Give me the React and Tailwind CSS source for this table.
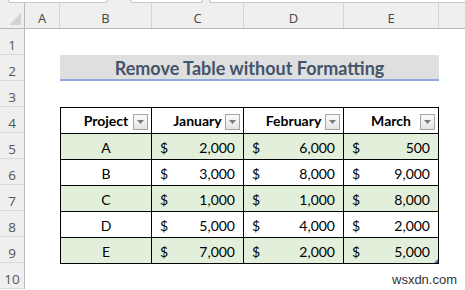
import React from "react";

const font = { fontFamily: "Lato, 'Open Sans', sans-serif" };

const rows = [
  ["A", "2,000", "6,000", "500"],
  ["B", "3,000", "8,000", "9,000"],
  ["C", "1,000", "1,000", "8,000"],
  ["D", "5,000", "4,000", "2,000"],
  ["E", "7,000", "2,000", "5,000"],
];

function FilterBtn() {
  return (
    <div className="absolute right-[3px] top-[6px] w-[15px] h-[16px] border border-[#a6a6a6] bg-gradient-to-b from-[#fafafa] to-[#e4e4e4] flex items-center justify-center">
      <svg width="7" height="4" viewBox="0 0 7 4">
        <path d="M0 0 L7 0 L3.5 4 Z" fill="#7a7a7a" />
      </svg>
    </div>
  );
}

function HeadCell({ w, children }) {
  return (
    <div className={`relative ${w} h-full border-r border-b border-black flex items-center justify-center font-bold text-[14px] text-black`}>
      <span className="pb-[1px]">{children}</span>
      <FilterBtn />
    </div>
  );
}

function MoneyCell({ w, v }) {
  return (
    <div className={`${w} h-full border-r border-b border-black flex items-center justify-between px-[8px] pt-[1px] text-[14px] text-black`}>
      <span>$</span>
      <span>{v}</span>
    </div>
  );
}

export default function App() {
  const colHeads = [
    ["w-[35px]", "A"],
    ["w-[92px]", "B"],
    ["w-[92px]", "C"],
    ["w-[100px]", "D"],
    ["w-[95px]", "E"],
  ];
  return (
    <div className="relative w-[465px] h-[290px] overflow-hidden bg-white" style={font}>
      {/* top strip */}
      <div className="h-[3px] bg-[#efefef] flex">
        <div className="ml-[8px] w-[100px] h-[3px] bg-white border border-t-0 border-[#c8c8c8] rounded-b-[3px]" />
        <div className="ml-[22px] w-[73px] h-[3px] bg-white border border-t-0 border-[#c8c8c8] rounded-b-[3px]" />
        <div className="ml-[6px] flex-1 h-[3px] bg-white border border-t-0 border-r-0 border-[#c8c8c8] rounded-bl-[3px]" />
      </div>
      {/* column headers */}
      <div className="flex h-[26px] bg-[#efefef] border-b border-[#b8b8b8] text-[13px] text-[#444]" style={{ fontFamily: "'Open Sans', sans-serif" }}>
        <div className="w-[25px] h-full border-r border-[#b8b8b8] flex items-end justify-end pr-[3px] pb-[3px]">
          <svg width="12" height="12" viewBox="0 0 12 12">
            <path d="M12 0 L12 12 L0 12 Z" fill="#d3d3d3" />
          </svg>
        </div>
        {colHeads.map(([w, l]) => (
          <div key={l} className={`${w} h-full border-r border-[#d4d4d4] flex items-center justify-center pt-[6px]`}>
            {l}
          </div>
        ))}
        <div className="flex-1" />
      </div>
      {/* body */}
      <div className="flex">
        <div className="w-[25px] bg-[#efefef] border-r border-[#b8b8b8] flex flex-col text-[13.5px] text-[#555]" style={{ fontFamily: "'Open Sans', sans-serif" }}>
          {[1, 2, 3, 4, 5, 6, 7, 8, 9, 10].map((n) => (
            <div key={n} className="h-[26px] border-b border-[#dadada] flex items-center justify-center pt-[8px] leading-none">
              {n}
            </div>
          ))}
        </div>
        <div className="flex-1 flex flex-col">
          <div className="h-[26px]" />
          <div className="h-[26px] ml-[35px] w-[379px] bg-[#dfdfdf] border-b-2 border-[#8faadc] flex items-center justify-center pt-[2px] font-bold text-[18px] text-[#44546a]">
            Remove Table without Formatting
          </div>
          <div className="h-[26px]" />
          <div className="relative ml-[35px] w-[379px] border-l border-t border-black flex flex-col">
            <div className="h-[26px] flex bg-white">
              <HeadCell w="w-[91px]">Project</HeadCell>
              <HeadCell w="w-[92px]">January</HeadCell>
              <HeadCell w="w-[100px]">February</HeadCell>
              <HeadCell w="w-[95px]">March</HeadCell>
            </div>
            {rows.map((r, i) => (
              <div key={r[0]} className={`h-[26px] flex ${i % 2 === 0 ? "bg-[#e2efda]" : "bg-white"}`}>
                <div className="w-[91px] h-full border-r border-b border-black flex items-center justify-center pt-[1px] text-[14px] text-black">
                  {r[0]}
                </div>
                <MoneyCell w="w-[92px]" v={r[1]} />
                <MoneyCell w="w-[100px]" v={r[2]} />
                <MoneyCell w="w-[95px]" v={r[3]} />
              </div>
            ))}
            <svg className="absolute right-[1px] bottom-[1px]" width="4" height="4" viewBox="0 0 4 4">
              <path d="M4 0 L4 4 L0 4 Z" fill="#4a6fb0" />
            </svg>
          </div>
        </div>
      </div>
      <div className="absolute left-[392px] top-[272px] text-[13px] leading-[16px] text-[#333]" style={{ fontFamily: "'Liberation Sans', sans-serif" }}>
        wsxdn.com
      </div>
    </div>
  );
}
